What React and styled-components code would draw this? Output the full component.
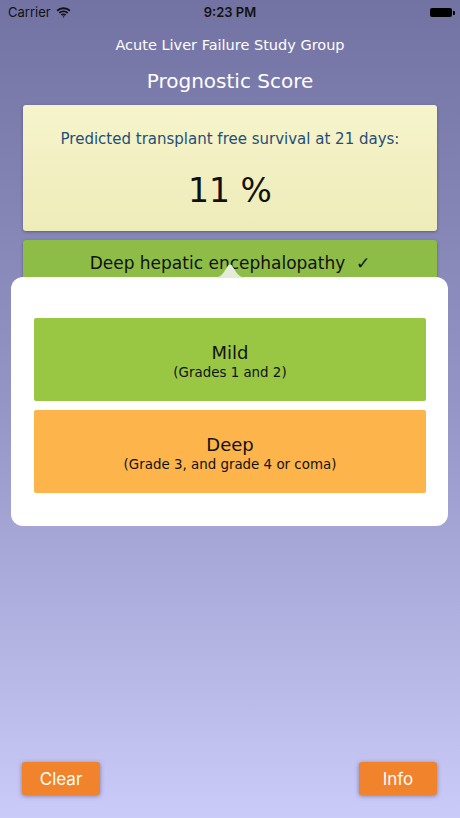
import React from 'react'
import styled, { createGlobalStyle } from 'styled-components'

const Global = createGlobalStyle`
  html, body {
    margin: 0;
    padding: 0;
  }
  body {
    font-family: "DejaVu Sans", Verdana, sans-serif;
  }
`

const Screen = styled.div`
  position: relative;
  width: 460px;
  height: 818px;
  overflow: hidden;
  display: flex;
  flex-direction: column;
  background: linear-gradient(to bottom, #7373a3 0%, #9595c6 50%, #cbcbf9 100%);
`

const StatusBar = styled.div`
  height: 24px;
  display: flex;
  align-items: center;
  justify-content: space-between;
  padding: 0 8px;
  font-family: Inter, "Liberation Sans", sans-serif;
  font-size: 13px;
  color: #111;
  position: relative;
`

const Carrier = styled.div`
  display: flex;
  align-items: center;
  gap: 5px;
  width: 80px;
`

const Time = styled.div`
  position: absolute;
  left: 0;
  right: 0;
  text-align: center;
  font-weight: 600;
  pointer-events: none;
`

const Battery = styled.div`
  width: 22px;
  height: 9px;
  background: #000;
  border-radius: 2px;
  position: relative;
  &::after {
    content: '';
    position: absolute;
    right: -3px;
    top: 3px;
    width: 2px;
    height: 4px;
    background: #000;
    border-radius: 0 1px 1px 0;
  }
`

const Org = styled.div`
  margin-top: 13px;
  text-align: center;
  color: #fff;
  font-size: 14.5px;
`

const Title = styled.div`
  margin-top: 16px;
  text-align: center;
  color: #fff;
  font-size: 20px;
`

const Content = styled.div`
  padding: 0 23px;
  margin-top: 12px;
  display: flex;
  flex-direction: column;
  gap: 9px;
`

const ResultCard = styled.div`
  height: 126px;
  border-radius: 3px;
  background: linear-gradient(to bottom, #f6f4cb, #eeecb9);
  box-shadow: 0 1px 3px rgba(40, 40, 80, 0.45);
  display: flex;
  flex-direction: column;
  align-items: center;
`

const ResultLabel = styled.div`
  margin-top: 25px;
  color: #1f4f78;
  font-size: 15px;
`

const ResultValue = styled.div`
  margin-top: 23px;
  font-size: 33px;
  color: #111;
`

const Field = styled.div`
  height: 44px;
  border-radius: 3px;
  background: #8ebd47;
  box-shadow: 0 1px 3px rgba(40, 40, 80, 0.45);
  display: flex;
  justify-content: center;
  padding-top: 13px;
  box-sizing: border-box;
  font-size: 17px;
  color: #111;
`

const Footer = styled.div`
  margin-top: auto;
  padding: 0 23px 23px 22px;
  display: flex;
  justify-content: space-between;
`

const Button = styled.button`
  width: 78px;
  height: 33px;
  border: none;
  border-radius: 3px;
  background: #f0832b;
  color: #fff;
  font-family: Inter, "Liberation Sans", sans-serif;
  font-size: 17px;
  box-shadow: 0 1px 4px rgba(60, 60, 110, 0.55);
`

const Popover = styled.div`
  position: absolute;
  left: 11px;
  top: 277px;
  width: 437px;
  height: 249px;
  background: #fff;
  border-radius: 12px;
  box-sizing: border-box;
  padding: 41px 22px 0 23px;
  display: flex;
  flex-direction: column;
  gap: 9px;
`

const Arrow = styled.svg`
  position: absolute;
  left: 201px;
  top: -15px;
`

const Option = styled.div`
  height: 83px;
  border-radius: 2px;
  background: ${p => p.$bg};
  display: flex;
  flex-direction: column;
  align-items: center;
  justify-content: center;
  color: #111;
  padding-top: 4px;
  box-sizing: border-box;
`

const OptionTitle = styled.div`
  font-size: 18px;
  line-height: 22px;
`

const OptionSub = styled.div`
  font-size: 13.4px;
  line-height: 18px;
`

const Wifi = () => (
  <svg width="15" height="11" viewBox="0 0 15 11">
    <path d="M7.5 2.2c2.2 0 4.2.85 5.7 2.25l1.3-1.35A9.8 9.8 0 0 0 7.5.3 9.8 9.8 0 0 0 .5 3.1l1.3 1.35A8.2 8.2 0 0 1 7.5 2.2z" fill="#111" />
    <path d="M7.5 5.3c1.35 0 2.55.5 3.5 1.35l1.3-1.35A6.7 6.7 0 0 0 7.5 3.4 6.7 6.7 0 0 0 2.7 5.3L4 6.65c.95-.85 2.15-1.35 3.5-1.35z" fill="#111" />
    <path d="M7.5 8.3c.55 0 1 .2 1.4.5L10.2 7.5A4 4 0 0 0 7.5 6.4 4 4 0 0 0 4.8 7.5L6.1 8.8c.4-.3.85-.5 1.4-.5zM7.5 10.8 8.5 9.7a1.4 1.4 0 0 0-2 0z" fill="#111" />
  </svg>
)

export default function App() {
  return (
    <Screen>
      <Global />
      <StatusBar>
        <Carrier>Carrier <Wifi /></Carrier>
        <Time>9:23 PM</Time>
        <Battery />
      </StatusBar>
      <Org>Acute Liver Failure Study Group</Org>
      <Title>Prognostic Score</Title>
      <Content>
        <ResultCard>
          <ResultLabel>Predicted transplant free survival at 21 days:</ResultLabel>
          <ResultValue>11 %</ResultValue>
        </ResultCard>
        <Field>Deep hepatic encephalopathy&nbsp;&nbsp;✓</Field>
      </Content>
      <Footer>
        <Button>Clear</Button>
        <Button>Info</Button>
      </Footer>
      <Popover>
        <Arrow width="36" height="16" viewBox="0 0 36 16">
          <path d="M0 16C6 16 9 14 12 10L16 3.5C17 2 19 2 20 3.5L24 10C27 14 30 16 36 16Z" fill="#e3ecd6" />
        </Arrow>
        <Option $bg="#99c744">
          <OptionTitle>Mild</OptionTitle>
          <OptionSub>(Grades 1 and 2)</OptionSub>
        </Option>
        <Option $bg="#fdb54b">
          <OptionTitle>Deep</OptionTitle>
          <OptionSub>(Grade 3, and grade 4 or coma)</OptionSub>
        </Option>
      </Popover>
    </Screen>
  )
}
